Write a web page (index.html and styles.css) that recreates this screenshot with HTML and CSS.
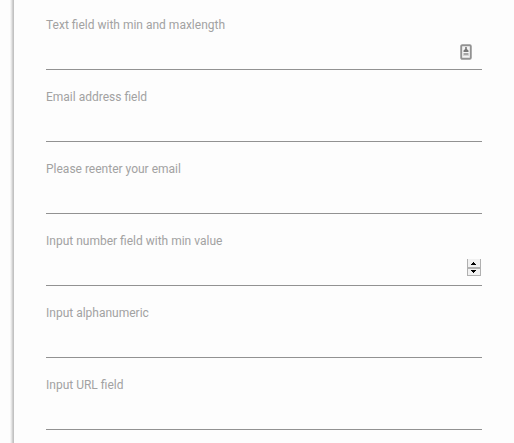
FILE: index.html
```html
<!DOCTYPE html>
<html lang="en">
<head>
<meta charset="utf-8">
<title>Form fields</title>
<link rel="stylesheet" href="styles.css">
</head>
<body>
<form class="card">
  <div class="field">
    <label class="label" for="text">Text field with min and maxlength</label>
    <div class="control">
      <input class="input" id="text" type="text">
      <svg class="autofill" width="12" height="16" viewBox="0 0 12 16" aria-hidden="true">
        <rect x="1.2" y="1.2" width="9.6" height="13.6" rx="1" fill="#f4f4f4" stroke="#929292" stroke-width="1.9"/>
        <path d="M5.2 3H6.8V5L8.5 6.5V8H3.5V6.5L5.2 5Z" fill="#777"/>
        <rect x="3.5" y="9" width="5" height="2" fill="#a6a6a6"/>
        <rect x="3" y="11" width="6" height="1" fill="#d5d5d5"/>
      </svg>
    </div>
  </div>
  <div class="field">
    <label class="label" for="email">Email address field</label>
    <div class="control"><input class="input" id="email" type="text"></div>
  </div>
  <div class="field">
    <label class="label" for="email2">Please reenter your email</label>
    <div class="control"><input class="input" id="email2" type="text"></div>
  </div>
  <div class="field">
    <label class="label" for="number">Input number field with min value</label>
    <div class="control">
      <input class="input" id="number" type="text">
      <svg class="spinner" width="15" height="17" viewBox="0 0 15 17" shape-rendering="crispEdges" aria-hidden="true">
        <rect width="14" height="17" fill="#b0b0b0"/>
        <rect x="1" y="0" width="12" height="8" fill="#f1f1f1"/>
        <rect x="1" y="10" width="12" height="6" fill="#f1f1f1"/>
        <path d="M6 3h1v1h1v1h1v1H4V5h1V4h1z" fill="#000"/>
        <path d="M4 11h5v1H8v1H7v1H6v-1H5v-1H4z" fill="#000"/>
      </svg>
    </div>
  </div>
  <div class="field">
    <label class="label" for="alnum">Input alphanumeric</label>
    <div class="control"><input class="input" id="alnum" type="text"></div>
  </div>
  <div class="field">
    <label class="label" for="url">Input URL field</label>
    <div class="control"><input class="input" id="url" type="text"></div>
  </div>
</form>
</body>
</html>
```
FILE: styles.css
```css
* {
  box-sizing: border-box;
}

body {
  margin: 0;
  height: 443px;
  overflow: hidden;
  background: #fdfdfd;
  font-family: Roboto, sans-serif;
}

.card {
  height: 443px;
  padding: 16px 32px 0 46px;
  background: linear-gradient(to right, #fdfdfd 10px, #ececec 11px, #dedede 12px, #c2c2c2 13px, #c2c2c2 14px, #fdfdfd 14px);
}

.field {
  height: 54px;
  margin-bottom: 18px;
  display: flex;
  flex-direction: column;
}

.label {
  height: 18px;
  font-size: 12px;
  line-height: 18px;
  color: #a2a2a2;
}

.control {
  flex: 1;
  display: flex;
  align-items: flex-start;
  border-bottom: 1px solid #929292;
}

.input {
  flex: 1;
  min-width: 0;
  height: 35px;
  padding: 0;
  border: 0;
  outline: 0;
  background: transparent;
  font: 16px Roboto, sans-serif;
}

.autofill {
  margin: 10px 10px 0 0;
}

.spinner {
  margin-top: 9px;
}
```
